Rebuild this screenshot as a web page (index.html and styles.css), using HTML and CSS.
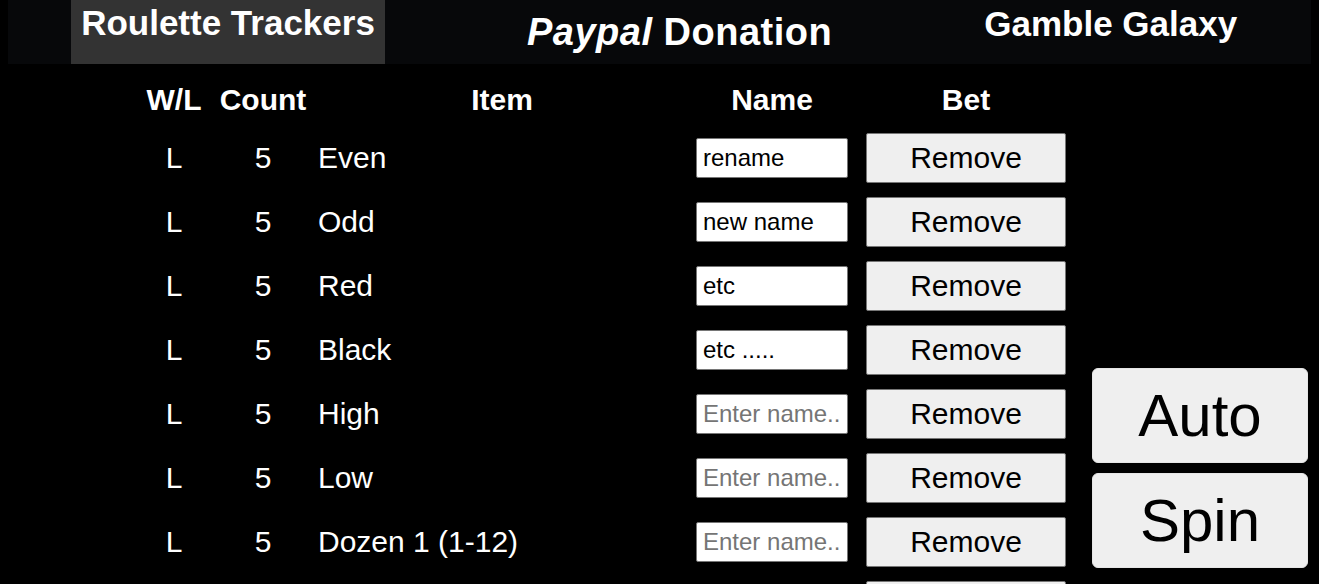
FILE: index.html
```html
<!DOCTYPE html>
<html lang="en">
<head>
<meta charset="utf-8">
<title>Roulette Trackers</title>
<link rel="stylesheet" href="styles.css">
</head>
<body>
<nav class="topnav">
  <a class="nav-item nav-active" href="#">Roulette Trackers</a>
  <a class="nav-item nav-paypal" href="#"><i>Paypal</i> Donation</a>
  <a class="nav-item nav-galaxy" href="#">Gamble Galaxy</a>
</nav>
<main class="main">
  <table class="tracker">
    <colgroup>
      <col class="c-wl"><col class="c-count"><col class="c-item"><col class="c-name"><col class="c-bet">
    </colgroup>
    <thead>
      <tr><th>W/L</th><th>Count</th><th>Item</th><th>Name</th><th>Bet</th></tr>
    </thead>
    <tbody>
      <tr><td class="mid">L</td><td class="mid">5</td><td class="item">Even</td><td class="mid"><input class="name" type="text" value="rename" placeholder="Enter name..."></td><td class="mid"><button class="remove">Remove</button></td></tr>
      <tr><td class="mid">L</td><td class="mid">5</td><td class="item">Odd</td><td class="mid"><input class="name" type="text" value="new name" placeholder="Enter name..."></td><td class="mid"><button class="remove">Remove</button></td></tr>
      <tr><td class="mid">L</td><td class="mid">5</td><td class="item">Red</td><td class="mid"><input class="name" type="text" value="etc" placeholder="Enter name..."></td><td class="mid"><button class="remove">Remove</button></td></tr>
      <tr><td class="mid">L</td><td class="mid">5</td><td class="item">Black</td><td class="mid"><input class="name" type="text" value="etc ....." placeholder="Enter name..."></td><td class="mid"><button class="remove">Remove</button></td></tr>
      <tr><td class="mid">L</td><td class="mid">5</td><td class="item">High</td><td class="mid"><input class="name" type="text" placeholder="Enter name..."></td><td class="mid"><button class="remove">Remove</button></td></tr>
      <tr><td class="mid">L</td><td class="mid">5</td><td class="item">Low</td><td class="mid"><input class="name" type="text" placeholder="Enter name..."></td><td class="mid"><button class="remove">Remove</button></td></tr>
      <tr><td class="mid">L</td><td class="mid">5</td><td class="item">Dozen 1 (1-12)</td><td class="mid"><input class="name" type="text" placeholder="Enter name..."></td><td class="mid"><button class="remove">Remove</button></td></tr>
      <tr><td class="mid">L</td><td class="mid">5</td><td class="item">Dozen 2 (13-24)</td><td class="mid"><input class="name" type="text" placeholder="Enter name..."></td><td class="mid"><button class="remove">Remove</button></td></tr>
    </tbody>
  </table>
</main>
<div class="controls">
  <button class="big">Auto</button>
  <button class="big">Spin</button>
</div>
</body>
</html>
```
FILE: styles.css
```css
html {
  overflow: hidden;
  background: #000;
}
body {
  margin: 0 8px;
  background: #000;
  color: #fff;
  font-family: "Liberation Sans", Arial, sans-serif;
}
.topnav {
  display: flex;
  align-items: flex-start;
  height: 64px;
  background: #07080a;
}
.nav-item {
  color: #fff;
  text-decoration: none;
  font-weight: bold;
  font-size: 35px;
  line-height: 40px;
}
.nav-active {
  margin-left: 63px;
  width: 314px;
  height: 64px;
  box-sizing: border-box;
  padding-top: 3px;
  text-align: center;
  background: #333;
}
.nav-paypal {
  margin-left: 142px;
  font-size: 38px;
  line-height: 43px;
  letter-spacing: 0.5px;
  padding-top: 11px;
}
.nav-galaxy {
  margin-left: 152px;
  padding-top: 4px;
}
.main {
  padding-left: 126px;
}
.tracker {
  border-collapse: collapse;
  table-layout: fixed;
  width: 946px;
  font-size: 30px;
}
.c-wl { width: 80px; }
.c-count { width: 98px; }
.c-item { width: 380px; }
.c-name { width: 160px; }
.c-bet { width: 228px; }
.tracker th {
  font-weight: bold;
  text-align: center;
  padding: 19px 0 9px;
  line-height: 34px;
}
.tracker td {
  padding: 7px 0;
  height: 50px;
  line-height: 34px;
  white-space: nowrap;
}
.mid {
  text-align: center;
}
.item {
  padding-left: 6px !important;
  text-align: left;
}
.name {
  display: block;
  margin: 0 auto;
  width: 152px;
  height: 40px;
  box-sizing: border-box;
  padding: 0 6px;
  border: 1px solid #767676;
  border-radius: 2px;
  background: #fff;
  color: #000;
  font-family: "Liberation Sans", Arial, sans-serif;
  font-size: 24px;
}
.name::placeholder {
  color: #757575;
}
.remove {
  display: block;
  margin: 0 auto;
  width: 200px;
  height: 50px;
  box-sizing: border-box;
  border: 1px solid #767676;
  border-radius: 2px;
  background: #efefef;
  color: #000;
  font-family: "Liberation Sans", Arial, sans-serif;
  font-size: 30px;
  padding: 0;
}
.controls {
  position: fixed;
  right: 11px;
  bottom: 16px;
  display: flex;
  flex-direction: column;
  gap: 10px;
}
.big {
  width: 216px;
  height: 95px;
  border: 1px solid #e6e6e6;
  border-radius: 6px;
  background: #efefef;
  color: #000;
  font-family: "Liberation Sans", Arial, sans-serif;
  font-size: 60px;
  padding: 0;
}
```
